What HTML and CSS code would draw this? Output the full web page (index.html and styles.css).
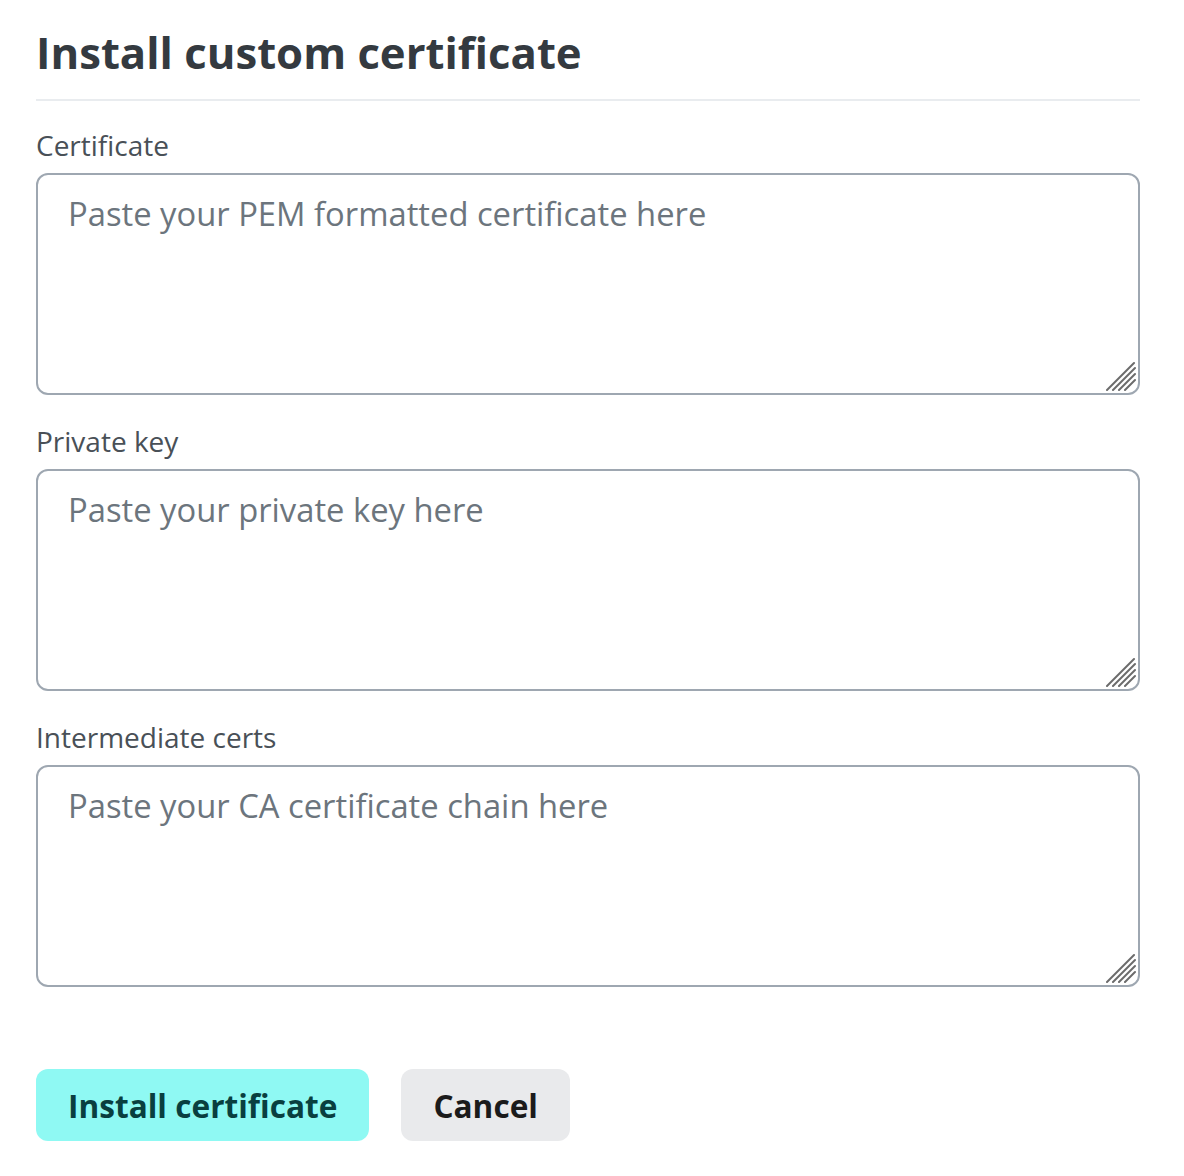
FILE: index.html
```html
<!DOCTYPE html>
<html>
<head>
<meta charset="utf-8">
<link rel="stylesheet" href="styles.css">
</head>
<body>
<div class="page">
  <h1 class="title">Install custom certificate</h1>
  <div class="divider"></div>
  <form class="form">
    <div class="field">
      <label class="label">Certificate</label>
      <div class="input-wrap">
        <textarea class="input" placeholder="Paste your PEM formatted certificate here"></textarea>
        <svg class="grip" width="30" height="30" viewBox="0 0 30 30"><g stroke="#6b6b6b" stroke-width="2" stroke-linecap="round"><line x1="1" y1="29" x2="28" y2="2"/><line x1="7" y1="29" x2="29" y2="7"/><line x1="13" y1="29" x2="29" y2="13"/><line x1="19" y1="29" x2="29" y2="19"/></g></svg>
      </div>
    </div>
    <div class="field">
      <label class="label">Private key</label>
      <div class="input-wrap">
        <textarea class="input" placeholder="Paste your private key here"></textarea>
        <svg class="grip" width="30" height="30" viewBox="0 0 30 30"><g stroke="#6b6b6b" stroke-width="2" stroke-linecap="round"><line x1="1" y1="29" x2="28" y2="2"/><line x1="7" y1="29" x2="29" y2="7"/><line x1="13" y1="29" x2="29" y2="13"/><line x1="19" y1="29" x2="29" y2="19"/></g></svg>
      </div>
    </div>
    <div class="field">
      <label class="label">Intermediate certs</label>
      <div class="input-wrap">
        <textarea class="input" placeholder="Paste your CA certificate chain here"></textarea>
        <svg class="grip" width="30" height="30" viewBox="0 0 30 30"><g stroke="#6b6b6b" stroke-width="2" stroke-linecap="round"><line x1="1" y1="29" x2="28" y2="2"/><line x1="7" y1="29" x2="29" y2="7"/><line x1="13" y1="29" x2="29" y2="13"/><line x1="19" y1="29" x2="29" y2="19"/></g></svg>
      </div>
    </div>
    <div class="actions">
      <button type="button" class="btn btn-primary">Install certificate</button>
      <button type="button" class="btn btn-secondary">Cancel</button>
    </div>
  </form>
</div>
</body>
</html>
```
FILE: styles.css
```css
* { box-sizing: border-box; }
html, body { margin: 0; padding: 0; background: #ffffff; }
body { font-family: "Open Sans", "Noto Sans", sans-serif; }
.page { padding: 20px 44px 0 36px; }
.title {
  margin: 0;
  font-size: 43.7px;
  font-weight: 700;
  color: #343a40;
  line-height: 64px;
}
.divider { height: 2px; background: #e9ecef; margin-top: 15px; }
.form { display: flex; flex-direction: column; }
.field { display: flex; flex-direction: column; margin-top: 24px; }
.field + .field { margin-top: 26px; }
.label {
  font-size: 28px;
  color: #495057;
  line-height: 40px;
  margin-bottom: 8px;
}
.input-wrap { position: relative; display: flex; }
.input {
  flex: 1;
  display: block;
  height: 222px;
  min-height: 222px;
  border: 2px solid #9ea7b1;
  border-radius: 12px;
  padding: 16px 30px;
  font-family: inherit;
  font-size: 32.75px;
  color: #343a40;
  resize: none;
  outline: none;
  margin: 0;
}
.input::placeholder { color: #6c757d; opacity: 1; }
.grip { position: absolute; right: 4px; bottom: 4px; pointer-events: none; }
.actions { display: flex; gap: 32px; margin-top: 82px; }
.btn {
  height: 72px;
  border: none;
  border-radius: 12px;
  font-family: inherit;
  font-size: 31.6px;
  font-weight: 700;
  padding: 0 32px;
}
.btn-primary { background: #8ff9f3; color: #093f3f; }
.btn-secondary { background: #e9eaec; color: #1b1b1b; }
```
